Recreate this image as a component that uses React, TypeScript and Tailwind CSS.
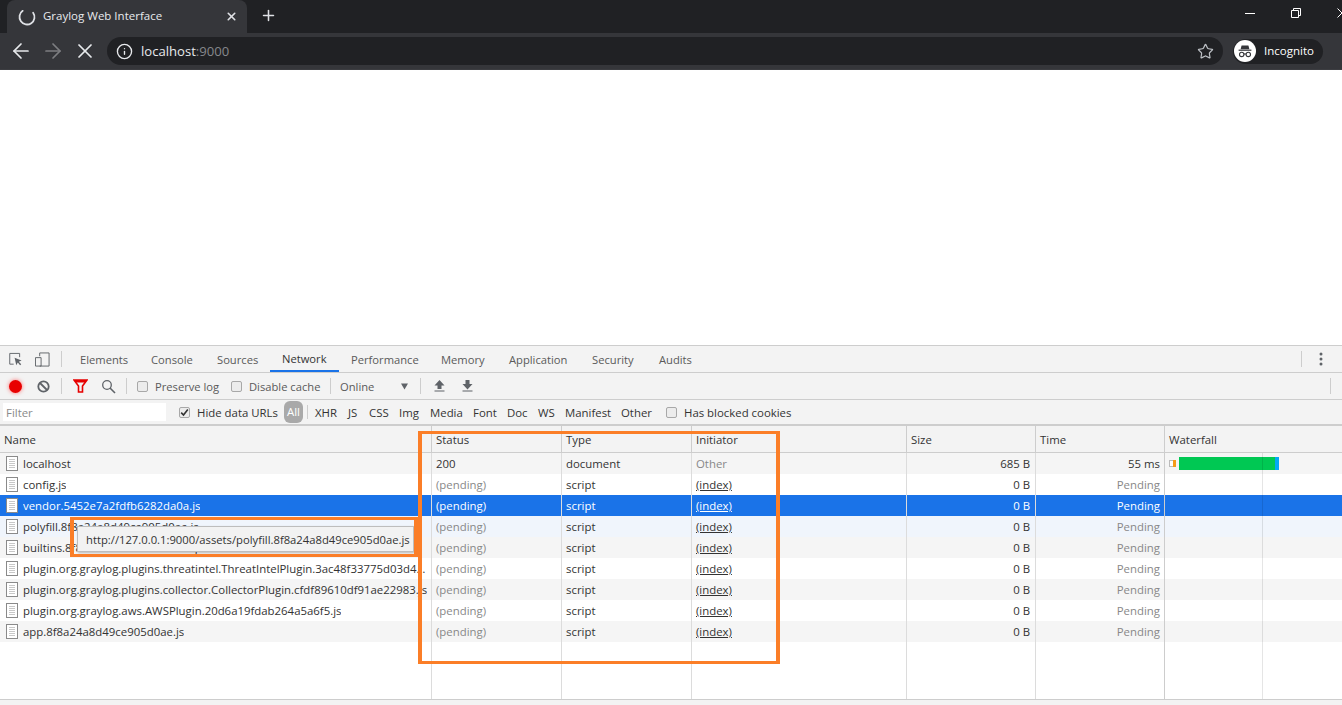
import { ArrowLeft, ArrowRight, X, Plus, Star, Info } from "lucide-react";

const font = "font-['Open_Sans','Liberation_Sans',sans-serif]";
const cols = "grid grid-cols-[431px_130px_130px_215px_129px_129px_1fr]";

const tabs: [string, string][] = [
  ["Elements", "w-[71px]"],
  ["Console", "w-[66px]"],
  ["Sources", "w-[65px]"],
  ["Network", "w-[69px]"],
  ["Performance", "w-[90px]"],
  ["Memory", "w-[68px]"],
  ["Application", "w-[83px]"],
  ["Security", "w-[67px]"],
  ["Audits", "w-[57px]"],
];

const types: [string, string][] = [
  ["XHR", "w-[33px]"],
  ["JS", "w-[21px]"],
  ["CSS", "w-[30px]"],
  ["Img", "w-[31px]"],
  ["Media", "w-[43px]"],
  ["Font", "w-[34px]"],
  ["Doc", "w-[31px]"],
  ["WS", "w-[27px]"],
  ["Manifest", "w-[56px]"],
  ["Other", "w-[45px]"],
];

const rows = [
  { name: "localhost", status: "200", type: "document", init: "Other", size: "685 B", time: "55 ms", bg: "bg-[#f5f5f5]" },
  { name: "config.js", bg: "bg-white" },
  { name: "vendor.5452e7a2fdfb6282da0a.js", bg: "bg-[#1a73e8]", sel: true },
  { name: "polyfill.8f8a24a8d49ce905d0ae.js", bg: "bg-[#f0f5fc]" },
  { name: "builtins.8f8a24a8d49ce905d0ae.js", bg: "bg-[#f5f5f5]" },
  { name: "plugin.org.graylog.plugins.threatintel.ThreatIntelPlugin.3ac48f33775d03d4…", bg: "bg-white" },
  { name: "plugin.org.graylog.plugins.collector.CollectorPlugin.cfdf89610df91ae22983.js", bg: "bg-[#f5f5f5]" },
  { name: "plugin.org.graylog.aws.AWSPlugin.20d6a19fdab264a5a6f5.js", bg: "bg-white" },
  { name: "app.8f8a24a8d49ce905d0ae.js", bg: "bg-[#f5f5f5]" },
];

function FileIcon() {
  return (
    <svg width="12" height="15" viewBox="0 0 12 15" className="shrink-0">
      <rect x="0.5" y="0.5" width="11" height="14" fill="#fff" stroke="#8a8a8a" />
      <path d="M3 3.5h6M3 5.5h6M3 7.5h6M3 9.5h6M3 11.5h6" stroke="#c8c8c8" strokeWidth="1" />
    </svg>
  );
}

function Check({ on }: { on?: boolean }) {
  return (
    <span className="w-[11px] h-[11px] rounded-[2px] border border-[#a8a8a8] bg-[#ececec] flex items-center justify-center shrink-0">
      {on && (
        <svg width="9" height="9" viewBox="0 0 9 9">
          <path d="M1.2 4.6 3.5 7 7.8 1.4" fill="none" stroke="#333" strokeWidth="1.6" />
        </svg>
      )}
    </span>
  );
}

function Sep({ h = "h-[16px]" }: { h?: string }) {
  return <span className={`block w-px ${h} bg-[#cdcdcd] shrink-0`} />;
}

function Incognito() {
  return (
    <svg width="22" height="22" viewBox="0 0 22 22" className="shrink-0">
      <circle cx="11" cy="11" r="11" fill="#fff" />
      <path d="M7.6 5.6h6.8l1 3.6H6.6z" fill="#35363a" />
      <rect x="4.6" y="9.6" width="12.8" height="1.2" fill="#35363a" />
      <circle cx="7.7" cy="14.4" r="2.2" fill="none" stroke="#35363a" strokeWidth="1.1" />
      <circle cx="14.3" cy="14.4" r="2.2" fill="none" stroke="#35363a" strokeWidth="1.1" />
      <path d="M9.9 14h2.2" stroke="#35363a" strokeWidth="1.1" />
    </svg>
  );
}

export default function App() {
  return (
    <div className={`w-[1342px] h-[705px] overflow-hidden flex flex-col bg-white relative ${font} text-[11.4px] text-[#333]`}>
      {/* Tab strip */}
      <div className="h-[33px] bg-[#202124] flex items-end shrink-0">
        <div className="ml-[7px] w-[240px] h-[33px] bg-[#35363a] rounded-t-[8px] flex items-center text-[#e8eaed]">
          <svg width="18" height="18" viewBox="0 0 18 18" className="ml-[11px] shrink-0">
            <path d="M9 1.5a7.5 7.5 0 1 0 7.5 7.5" transform="rotate(-35 9 9)" fill="none" stroke="#dfe1e5" strokeWidth="1.8" strokeLinecap="round" />
          </svg>
          <span className="ml-[7px] mb-[2px] text-[11.5px] leading-none whitespace-nowrap">Graylog Web Interface</span>
          <X size={13} strokeWidth={3} className="ml-auto mr-[9px] text-[#dfe1e5]" />
        </div>
        <Plus size={17} strokeWidth={2.2} className="ml-[13px] mb-[9px] text-[#dfe1e5]" />
        <div className="ml-auto h-[33px] flex items-start pt-[8px] text-white mr-[-5px]">
          <span className="block w-[10px] h-px mt-[5px] bg-white shrink-0" />
          <svg width="10" height="10" viewBox="0 0 10 10" className="ml-[36px] shrink-0">
            <path d="M2.5 2V.5h7v7H8M.5 2.5h7v7h-7z" fill="none" stroke="#fff" />
          </svg>
          <svg width="10" height="10" viewBox="0 0 10 10" className="ml-[36px] shrink-0">
            <path d="M.5.5l9 9M9.5.5l-9 9" fill="none" stroke="#fff" />
          </svg>
        </div>
      </div>

      {/* Toolbar */}
      <div className="h-[37px] bg-[#35363a] flex items-center shrink-0 border-b border-[#3c3d41]">
        <ArrowLeft size={24} strokeWidth={1.7} className="ml-[9px] text-[#e8eaed]" />
        <ArrowRight size={24} strokeWidth={1.7} className="ml-[8px] text-[#7d7e81]" />
        <X size={24} strokeWidth={1.7} className="ml-[8px] text-[#e8eaed]" />
        <div className="ml-[10px] w-[1116px] h-[28px] rounded-full bg-[#202124] flex items-center">
          <Info size={17} strokeWidth={1.9} className="ml-[9px] text-[#e8eaed]" />
          <span className="ml-[8px] mt-px text-[13.1px] text-[#e8eaed] leading-none">
            localhost<span className="text-[#86888c]">:9000</span>
          </span>
          <Star size={17} strokeWidth={1.7} className="ml-auto mr-[9px] text-[#bdc1c6]" />
        </div>
        <div className="ml-[10px] w-[90px] h-[25px] rounded-full bg-[#202124] flex items-center pl-px">
          <Incognito />
          <span className="ml-[8px] text-[11.5px] text-white leading-none">Incognito</span>
        </div>
      </div>

      {/* Page */}
      <div className="h-[275px] bg-white shrink-0" />

      {/* DevTools */}
      <div className="flex-1 flex flex-col bg-[#f3f3f3] border-t border-[#cdcdcd] min-h-0 relative text-[#5a5a5a]">
        {/* Tabs */}
        <div className="h-[27px] flex items-center border-b border-[#cdcdcd] shrink-0 text-[11.2px]">
          <svg width="14" height="15" viewBox="0 0 15 15" className="ml-[9px] shrink-0">
            <path d="M5 12.5H.8V1h10.6v4" fill="none" stroke="#5f6368" />
            <path d="M6 5.5l7.5 3-3 1.3 2.6 2.9-1.2 1-2.5-2.9-1.6 2.8z" fill="#5f6368" />
          </svg>
          <svg width="15" height="15" viewBox="0 0 16 15" className="ml-[12px] shrink-0">
            <path d="M5 4V.5h10v14H5M.5 5.5h6v9h-6z" fill="none" stroke="#5f6368" />
          </svg>
          <span className="ml-[11px]"><Sep /></span>
          <div className="ml-[6px] flex h-full">
            {tabs.map(([t, w]) => (
              <span
                key={t}
                className={`${w} h-full px-3 pt-[2px] flex items-center whitespace-nowrap ${
                  t === "Network" ? "border-b-2 border-[#1a73e8] text-[#333]" : ""
                }`}
              >
                {t}
              </span>
            ))}
          </div>
          <span className="ml-auto"><Sep /></span>
          <svg width="4" height="14" viewBox="0 0 4 14" className="ml-[17px] mr-[19px] shrink-0">
            <circle cx="2" cy="2" r="1.5" fill="#5f6368" />
            <circle cx="2" cy="7" r="1.5" fill="#5f6368" />
            <circle cx="2" cy="12" r="1.5" fill="#5f6368" />
          </svg>
        </div>

        {/* Network toolbar */}
        <div className="h-[27px] flex items-center border-b border-[#cdcdcd] shrink-0 text-[11.2px]">
          <span className="ml-[9px] w-[13px] h-[13px] rounded-full bg-[#e80000] shadow-[0_0_4px_#ff6b6b] shrink-0" />
          <svg width="13" height="13" viewBox="0 0 13 13" className="ml-[15px] shrink-0">
            <circle cx="6.5" cy="6.5" r="5.2" fill="none" stroke="#5f6368" strokeWidth="1.8" />
            <path d="M3 3l7 7" stroke="#5f6368" strokeWidth="1.8" />
          </svg>
          <span className="ml-[11px]"><Sep /></span>
          <svg width="15" height="14" viewBox="0 0 15 14" className="ml-[11px] shrink-0">
            <path d="M1 1h13L9.5 7v6h-4V7z" fill="none" stroke="#e60000" strokeWidth="1.6" />
            <path d="M1 1h13l-2 2.4H3z" fill="#e60000" />
          </svg>
          <svg width="15" height="15" viewBox="0 0 15 15" className="ml-[13px] shrink-0">
            <circle cx="6" cy="6" r="4.3" fill="none" stroke="#5f6368" strokeWidth="1.3" />
            <path d="M9 9l5 5" stroke="#5f6368" strokeWidth="1.6" />
          </svg>
          <span className="ml-[10px]"><Sep /></span>
          <span className="ml-[10px]"><Check /></span>
          <span className="ml-[7px] pt-[2px] w-[65px] whitespace-nowrap">Preserve log</span>
          <span className="ml-[11px]"><Check /></span>
          <span className="ml-[7px] pt-[2px] w-[72px] whitespace-nowrap">Disable cache</span>
          <span className="ml-[9px]"><Sep /></span>
          <span className="ml-[9px] pt-[2px] w-[50px]">Online</span>
          <svg width="7" height="7" viewBox="0 0 8 7" className="ml-[11px] shrink-0">
            <path d="M0 0h8L4 7z" fill="#5f6368" />
          </svg>
          <span className="ml-[12px]"><Sep /></span>
          <svg width="11" height="12" viewBox="0 0 11 12" className="ml-[13px] shrink-0">
            <path d="M5.5 0l5 5.5H7.5V9h-4V5.5H.5zM.5 10.5h10v1H.5z" fill="#5f6368" />
          </svg>
          <svg width="11" height="12" viewBox="0 0 11 12" className="ml-[17px] shrink-0">
            <path d="M3.5 0h4v4h3l-5 5.5-5-5.5h3zM.5 10.5h10v1H.5z" fill="#5f6368" />
          </svg>
          <span className="ml-auto mr-[11px]"><Sep /></span>
        </div>

        {/* Filter bar */}
        <div className="h-[24px] flex items-center shrink-0">
          <div className="ml-[3px] w-[163px] h-[18px] bg-white flex items-center pl-[3px] pt-[2px] text-[#8a8a8a]">Filter</div>
          <span className="ml-[13px]"><Check on /></span>
          <span className="ml-[7px] pt-px w-[81px] whitespace-nowrap text-[#333]">Hide data URLs</span>
          <span className="ml-[6px] w-[19px] h-[22px] rounded-[6px] bg-[#a9a9a9] text-white flex items-center justify-center">All</span>
          <span className="ml-[4px]"><Sep h="h-[14px]" /></span>
          <div className="ml-[7px] pt-[2px] flex">
            {types.map(([t, w]) => (
              <span key={t} className={`${w} whitespace-nowrap text-[#333]`}>{t}</span>
            ))}
          </div>
          <Check />
          <span className="ml-[7px] pt-px whitespace-nowrap text-[#333]">Has blocked cookies</span>
        </div>

        {/* Table */}
        <div className="flex-1 flex flex-col min-h-0 border-t-2 border-[#cdcdcd] relative">
          <div className={`${cols} h-[27px] border-b border-[#cdcdcd] shrink-0 text-[#333]`}>
            {["Name", "Status", "Type", "Initiator", "Size", "Time", "Waterfall"].map((h, i) => (
              <div key={h} className={`flex items-center pl-[4px] pt-px ${i ? "border-l border-[#cdcdcd]" : ""}`}>{h}</div>
            ))}
          </div>

          {rows.map((r, i) => {
            const sel = !!r.sel;
            const line = "border-l border-[#dcdcdc]";
            const dim = sel ? "text-white" : "text-[#888]";
            const main = sel ? "text-white" : "text-[#333]";
            return (
              <div key={r.name} className={`${cols} h-[21px] shrink-0 ${r.bg} ${main}`}>
                <div className="flex items-center pl-[6px] overflow-hidden">
                  <FileIcon />
                  <span className="ml-[5px] whitespace-nowrap overflow-hidden">{r.name}</span>
                </div>
                <div className={`${line} flex items-center pl-[4px] ${r.status ? main : dim}`}>{r.status ?? "(pending)"}</div>
                <div className={`${line} flex items-center pl-[4px]`}>{r.type ?? "script"}</div>
                <div className={`${line} flex items-center pl-[4px]`}>
                  {r.init ? <span className="text-[#888]">{r.init}</span> : <span className="underline">(index)</span>}
                </div>
                <div className={`${line} flex items-center justify-end pr-[5px]`}>{r.size ?? "0 B"}</div>
                <div className={`${line} flex items-center justify-end pr-[4px] ${r.time ? main : dim}`}>{r.time ?? "Pending"}</div>
                <div className={`${line} flex items-center pl-[4px]`}>
                  {i === 0 && (
                    <>
                      <span className="w-[4px] h-[7px] bg-white border border-[#bbb] border-r-0" />
                      <span className="w-[3px] h-[7px] bg-[#f59c1a]" />
                      <span className="ml-[3px] w-[96px] h-[13px] bg-[#00c853]" />
                      <span className="w-[4px] h-[13px] bg-[#03a9f4]" />
                    </>
                  )}
                </div>
              </div>
            );
          })}

          <div className={`${cols} flex-1 bg-white min-h-0`}>
            {[0, 1, 2, 3, 4, 5, 6].map((i) => (
              <div key={i} className={i ? "border-l border-[#dcdcdc]" : ""} />
            ))}
          </div>

          {/* Waterfall time marker */}
          <span className="absolute left-[1262px] top-[27px] bottom-0 w-px bg-black/10" />
          <span className="absolute left-[1164px] top-[27px] bottom-0 w-px bg-[#cdcdcd]" />
        </div>

        {/* Status bar */}
        <div className="h-[6px] shrink-0 border-t border-[#cdcdcd] bg-[#f3f3f3]" />

        {/* Tooltip over the rows */}
        <div className="absolute left-[77px] top-[180px] w-[337px] h-[26px] bg-[#f2f2f2] border border-[#bdbdbd] shadow-[1px_1px_2px_rgba(0,0,0,0.25)] flex items-center pl-[8px] pt-[2px] text-[11.25px] text-[#333] whitespace-nowrap">
          http://127.0.0.1:9000/assets/polyfill.8f8a24a8d49ce905d0ae.js
        </div>
        {/* Annotation boxes */}
        <div className="absolute left-[70px] top-[171px] w-[348px] h-[40px] border-x-4 border-y-[3px] border-[#fb7e27]" />
        <div className="absolute left-[418px] top-[85px] w-[362px] h-[233px] border-x-4 border-y-[3px] border-[#fb7e27]" />
      </div>
    </div>
  );
}
